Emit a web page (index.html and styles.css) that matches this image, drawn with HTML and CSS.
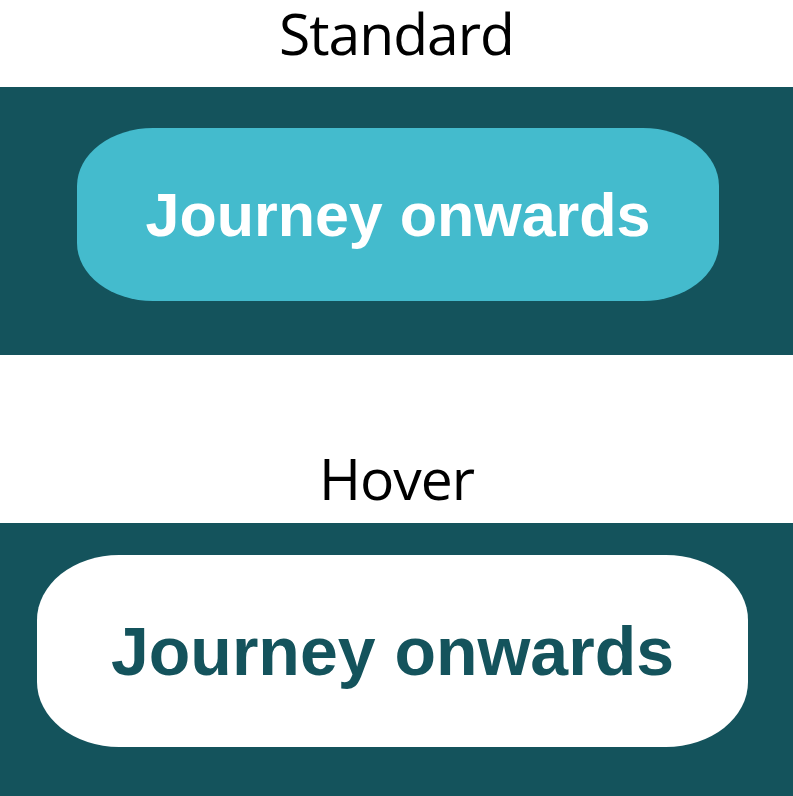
FILE: index.html
```html
<!DOCTYPE html>
<html lang="en">
<head>
    <meta charset="UTF-8">
    <meta name="viewport" content="width=device-width, initial-scale=1.0">
    <title>Button States</title>
    <link rel="stylesheet" href="styles.css">
</head>
<body>

<section class="state state-standard">
    <h2>Standard</h2>
    <div class="band">
        <a href="#" class="btn btn-standard">Journey onwards</a>
    </div>
</section>

<section class="state state-hover">
    <h2>Hover</h2>
    <div class="band">
        <a href="#" class="btn btn-hover">Journey onwards</a>
    </div>
</section>

</body>
</html>
```

FILE: styles.css
```css
body {
    margin: 0;
    padding: 0;
    background-color: #fff;
    color: #000;
    font-family: "Open Sans", "Noto Sans", sans-serif;
}
.state h2 {
    margin: 0;
    font-size: 57px;
    font-weight: 400;
    line-height: 66px;
    letter-spacing: -1px;
    text-align: center;
}
.state-standard h2 {
    margin-bottom: 21px;
}
.state-hover {
    margin-top: 90px;
}
.state-hover h2 {
    margin-bottom: 12px;
}
.band {
    background-color: #14535c; /* Dark teal */
    display: flex;
    justify-content: center;
}
.state-standard .band {
    padding: 41px 74px 54px 77px;
}
.state-hover .band {
    padding: 32px 45px 49px 37px;
}
.btn {
    flex: 1;
    display: flex;
    align-items: center;
    justify-content: center;
    font-family: "Liberation Sans", Arial, sans-serif;
    font-weight: 700;
    text-decoration: none;
}
.btn-standard {
    height: 173px;
    border-radius: 76px / 58px;
    font-size: 61px;
    background-color: #44bbcd; /* Light teal */
    color: #fff;
}
.btn-hover {
    height: 192px;
    border-radius: 82px / 65px;
    font-size: 68px;
    background-color: #fff;
    color: #14535c;
}
```
